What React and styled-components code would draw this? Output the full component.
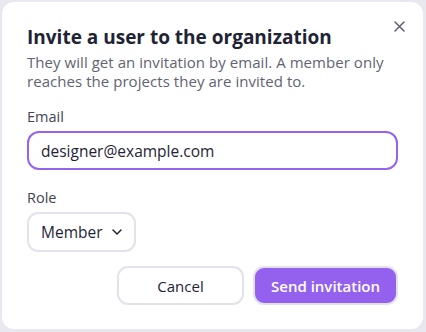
import styled, { createGlobalStyle } from "styled-components";

const Global = createGlobalStyle`
  html, body {
    margin: 0;
    padding: 0;
    background: #e9e7f0;
  }
  body {
    font-family: "Open Sans", "Noto Sans", sans-serif;
  }
  * { box-sizing: border-box; }
`;

const Page = styled.div`
  width: 426px;
  height: 332px;
  padding: 2px 3px 3px 2px;
`;

const Dialog = styled.div`
  position: relative;
  height: 100%;
  background: #ffffff;
  border-radius: 12px;
  padding: 22px 25px 0 25px;
  display: flex;
  flex-direction: column;
`;

const Title = styled.h2`
  margin: 0;
  font-size: 19px;
  font-weight: 700;
  line-height: 26px;
  color: #1e2436;
`;

const Subtitle = styled.p`
  margin: 3px 0 0 0;
  font-size: 15px;
  letter-spacing: 0.05px;
  line-height: 19px;
  color: #5f6372;
`;

const Close = styled.button`
  position: absolute;
  top: 15px;
  right: 15px;
  width: 18px;
  height: 18px;
  padding: 0;
  border: 0;
  background: none;
  display: flex;
  align-items: center;
  justify-content: center;
  color: #5c6070;
`;

const Field = styled.div`
  display: flex;
  flex-direction: column;
  align-items: flex-start;
  margin-top: ${(p) => p.$top}px;
`;

const Label = styled.label`
  font-size: 14.5px;
  line-height: 18px;
  color: #3f4454;
  margin-bottom: 5px;
`;

const Input = styled.div`
  width: 100%;
  height: 39px;
  border: 2px solid #9563ee;
  border-radius: 12px;
  padding: 0 12px;
  display: flex;
  align-items: center;
  font-size: 15.5px;
  color: #1e2436;
`;

const Select = styled.div`
  height: 40px;
  border: 2px solid #e3e1ea;
  border-radius: 11px;
  padding: 0 12px 0 12px;
  display: flex;
  align-items: center;
  gap: 9px;
  font-size: 15.5px;
  color: #1e2436;
`;

const Actions = styled.div`
  display: flex;
  justify-content: flex-end;
  gap: 9px;
  margin-top: 14px;
`;

const Button = styled.button`
  height: 39px;
  border-radius: 11px;
  font-family: inherit;
  font-size: 15px;
  font-weight: ${(p) => (p.$primary ? 600 : 500)};
  padding: 0 ${(p) => (p.$primary ? 16 : 0)}px;
  width: ${(p) => (p.$primary ? "auto" : "127px")};
  color: ${(p) => (p.$primary ? "#ffffff" : "#1e2436")};
  background: ${(p) => (p.$primary ? "#9461ef" : "#ffffff")};
  border: 2px solid ${(p) => (p.$primary ? "#e4e0ef" : "#e3e1ea")};
`;

export default function App() {
  return (
    <Page>
      <Global />
      <Dialog>
        <Close aria-label="Close">
          <svg width="11" height="11" viewBox="0 0 11 11" fill="none">
            <path d="M1 1L10 10M10 1L1 10" stroke="currentColor" strokeWidth="1.5" strokeLinecap="round" />
          </svg>
        </Close>
        <Title>Invite a user to the organization</Title>
        <Subtitle>
          They will get an invitation by email. A member only reaches the projects they are invited to.
        </Subtitle>
        <Field $top={17}>
          <Label>Email</Label>
          <Input>designer@example.com</Input>
        </Field>
        <Field $top={19}>
          <Label>Role</Label>
          <Select>
            Member
            <svg width="10" height="6" viewBox="0 0 10 6" fill="none">
              <path d="M1 1L5 5L9 1" stroke="#1e2436" strokeWidth="1.5" strokeLinecap="round" strokeLinejoin="round" />
            </svg>
          </Select>
        </Field>
        <Actions>
          <Button>Cancel</Button>
          <Button $primary>Send invitation</Button>
        </Actions>
      </Dialog>
    </Page>
  );
}
